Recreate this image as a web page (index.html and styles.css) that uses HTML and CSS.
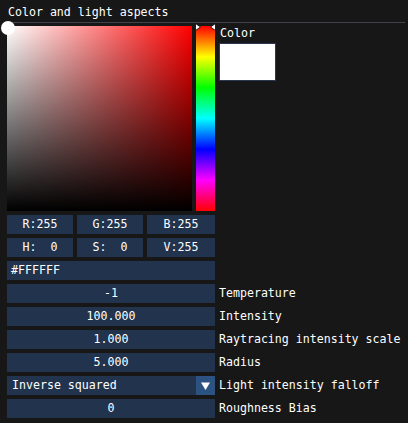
FILE: index.html
```html
<!DOCTYPE html>
<html>
<head>
<meta charset="utf-8">
<link rel="stylesheet" href="styles.css">
</head>
<body>
<div class="window">
  <div class="title">Color and light aspects</div>
  <div class="sep"></div>
  <div class="picker">
    <div class="sv">
      <div class="sv-dark"></div>
      <div class="cursor"></div>
    </div>
    <div class="hue">
      <svg class="arrow arrow-l" width="6" height="8" viewBox="0 0 6 8"><polygon points="0.5,0.5 5.5,4 0.5,7.5" fill="#fff" stroke="#000" stroke-width="0.8"/></svg>
      <svg class="arrow arrow-r" width="6" height="8" viewBox="0 0 6 8"><polygon points="5.5,0.5 0.5,4 5.5,7.5" fill="#fff" stroke="#000" stroke-width="0.8"/></svg>
    </div>
    <div class="side">
      <div class="side-label">Color</div>
      <div class="swatch"></div>
    </div>
  </div>
  <div class="triple">
    <div class="field center">R:255</div>
    <div class="field center">G:255</div>
    <div class="field center">B:255</div>
  </div>
  <div class="triple">
    <div class="field center">H:  0</div>
    <div class="field center">S:  0</div>
    <div class="field center">V:255</div>
  </div>
  <div class="row">
    <div class="field left">#FFFFFF</div>
  </div>
  <div class="row">
    <div class="field center">-1</div>
    <div class="label">Temperature</div>
  </div>
  <div class="row">
    <div class="field center">100.000</div>
    <div class="label">Intensity</div>
  </div>
  <div class="row">
    <div class="field center">1.000</div>
    <div class="label">Raytracing intensity scale</div>
  </div>
  <div class="row">
    <div class="field center">5.000</div>
    <div class="label">Radius</div>
  </div>
  <div class="row">
    <div class="field combo">
      <span class="combo-text">Inverse squared</span>
      <span class="combo-btn"><svg width="9" height="8" viewBox="0 0 9 8"><polygon points="0,0.5 9,0.5 4.5,8" fill="#fff"/></svg></span>
    </div>
    <div class="label">Light intensity falloff</div>
  </div>
  <div class="row">
    <div class="field center">0</div>
    <div class="label">Roughness Bias</div>
  </div>
</div>
</body>
</html>
```
FILE: styles.css
```css
html, body {
  margin: 0;
  padding: 0;
  background: #171717;
}
body {
  width: 408px;
  height: 423px;
  overflow: hidden;
  font-family: "DejaVu Sans Mono", "Liberation Mono", monospace;
  font-size: 11.6px;
  color: #ffffff;
}
.window {
  padding: 0 3px 0 7px;
}
.title {
  height: 22px;
  line-height: 24px;
  padding-left: 1px;
  white-space: pre;
}
.sep {
  height: 1px;
  background: #42424b;
  margin-bottom: 3px;
}
.picker {
  display: flex;
  gap: 4px;
  height: 185px;
}
.sv {
  position: relative;
  width: 185px;
  height: 185px;
  background: linear-gradient(to right, #ffffff, #ff0000);
}
.sv-dark {
  width: 100%;
  height: 100%;
  background: linear-gradient(to bottom, rgba(0,0,0,0), #000000);
}
.cursor {
  position: absolute;
  left: -6px;
  top: -5px;
  width: 14px;
  height: 14px;
  border-radius: 50%;
  background: #ffffff;
}
.hue {
  position: relative;
  width: 19px;
  height: 185px;
  background: linear-gradient(to bottom, #ff0000 0%, #ffff00 16.67%, #00ff00 33.33%, #00ffff 50%, #0000ff 66.67%, #ff00ff 83.33%, #ff0000 100%);
}
.arrow {
  position: absolute;
  top: -3px;
}
.arrow-l { left: -1px; }
.arrow-r { right: -1px; }
.side {
  display: flex;
  flex-direction: column;
}
.side-label {
  height: 13px;
  line-height: 14px;
  padding-left: 1px;
  margin-bottom: 4px;
}
.swatch {
  width: 55px;
  height: 36px;
  background: #ffffff;
  border: 1px solid #2a3852;
}
.triple {
  display: grid;
  grid-template-columns: 66px 66px 68px;
  gap: 4px;
  margin-top: 4px;
  width: 208px;
}
.row {
  display: flex;
  gap: 4px;
  margin-top: 4px;
  height: 19px;
}
.row .field {
  width: 208px;
  flex: none;
}
.field {
  height: 19px;
  line-height: 19px;
  background: #21334d;
  white-space: pre;
}
.center { text-align: center; }
.left { padding-left: 4px; box-sizing: border-box; }
.label {
  line-height: 19px;
  white-space: pre;
}
.combo {
  display: flex;
  justify-content: space-between;
}
.combo-text {
  padding-left: 5px;
}
.combo-btn {
  width: 19px;
  height: 19px;
  background: #2c5282;
  display: flex;
  align-items: center;
  justify-content: center;
}
```
